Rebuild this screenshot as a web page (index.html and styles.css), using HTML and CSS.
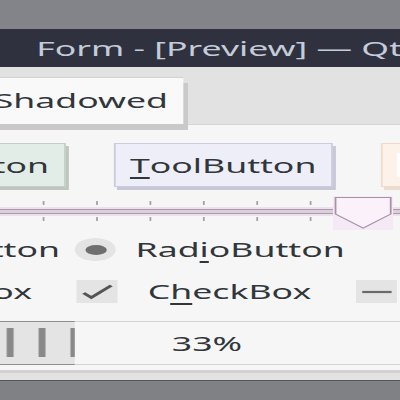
FILE: index.html
```html
<!DOCTYPE html>
<html>
<head>
<meta charset="utf-8">
<title>Form - [Preview]</title>
<link rel="stylesheet" href="styles.css">
</head>
<body>
  <div class="screen">
    <div class="topband"></div>
    <div class="titlebar">Form - [Preview] — Qt Designer</div>
    <div class="window">
      <div class="tabbar">
        <div class="lead tab-lead">
          <div class="tab">Shadowed</div>
        </div>
      </div>
      <div class="pane">
        <div class="row buttons">
          <div class="lead">
            <div class="btn push">PushButton</div>
          </div>
          <div class="btn tool"><u>T</u>oolButton</div>
          <div class="btn cmd"><span class="icon"></span>CommandLinkButton</div>
        </div>

        <div class="slider">
          <div class="ticks">
            <i></i><i></i><i></i><i></i><i></i><i></i><i></i>
          </div>
          <div class="groove"></div>
          <div class="ticks low">
            <i></i><i></i><i></i><i></i><i></i><i></i><i></i>
          </div>
          <svg class="handle" viewBox="0 0 34 34" width="34" height="34">
            <rect x="0" y="0" width="34" height="34" fill="#f6e9f6"/>
            <polygon points="1.5,1.5 32.5,1.5 32.5,18 17,32 1.5,18" fill="#faf1fa" stroke="#a693a6" stroke-width="1"/>
          </svg>
        </div>

        <div class="row radios">
          <div class="lead">
            <div class="radio"><span class="ind"></span>RadioButton</div>
          </div>
          <div class="radio"><span class="ind"><span class="dot"></span></span>Rad<u>i</u>oButton</div>
        </div>

        <div class="row checks">
          <div class="lead">
            <div class="check"><span class="box"></span>CheckBox</div>
          </div>
          <div class="check">
            <span class="box">
              <svg viewBox="0 0 23 23" width="23" height="23"><polyline points="4,13 8.3,17.5 19.5,5.5" fill="none" stroke="#555" stroke-width="2.4"/></svg>
            </span>C<u>h</u>eckBox
          </div>
          <div class="check">
            <span class="box">
              <svg viewBox="0 0 23 23" width="23" height="23"><line x1="3.5" y1="12" x2="20" y2="12" stroke="#6a6a6a" stroke-width="2.2"/></svg>
            </span>CheckBox
          </div>
        </div>

        <div class="progress">
          <div class="fill"></div>
          <span class="label">33%</span>
        </div>
      </div>
    </div>
    <div class="bottomband"></div>
  </div>
</body>
</html>
```

FILE: styles.css
```css
html, body {
  margin: 0;
  height: 100%;
  overflow: hidden;
  background: #838489;
}

/* the whole preview is drawn narrow and stretched sideways */
.screen {
  width: 225px;
  height: 400px;
  transform: scaleX(1.78);
  transform-origin: 0 0;
  overflow: hidden;
  display: flex;
  flex-direction: column;
  font-family: "Noto Sans", "Open Sans", sans-serif;
  font-size: 20px;
  color: #31363b;
}

.topband {
  flex: none;
  height: 29px;
  background: #838489;
}

.titlebar {
  flex: none;
  height: 38px;
  display: flex;
  align-items: center;
  padding-left: 20.4px;
  background: #2f323e;
  color: #c4ccda;
  white-space: nowrap;
}

.window {
  flex: none;
  background: #e2e2e2;
  padding-bottom: 7px;
}

/* a lead cell ends where its (clipped) first widget ends */
.lead {
  flex: none;
  display: flex;
  justify-content: flex-end;
}

.tabbar {
  height: 57px;
  display: flex;
  align-items: flex-end;
}

.tab-lead {
  width: 102.8px;
}

.tab {
  flex: none;
  box-sizing: border-box;
  height: 47px;
  padding: 0 8.4px 2px 10px;
  display: flex;
  align-items: center;
  background: #f9f9f9;
  border-top: 1px solid #d2d2d2;
  box-shadow: 2.6px 6px 0 #c9c9c9;
  white-space: nowrap;
}

.pane {
  background: #f6f6f6;
  border-top: 1px solid #d5d5d5;
  border-bottom: 3px solid #d2d2d2;
  padding: 18px 0 5px;
}

.row {
  display: flex;
  align-items: center;
  white-space: nowrap;
}

/* buttons */
.buttons {
  height: 44px;
}

.buttons .lead {
  width: 36.5px;
}

.btn {
  flex: none;
  box-sizing: border-box;
  height: 44px;
  padding: 0 8px;
  display: flex;
  align-items: center;
  border: 1px solid;
  white-space: nowrap;
}

.btn.push {
  background: #e3ede7;
  border-color: #c6cec9;
  box-shadow: 1.7px 3px 0 #bfc6c1;
}

.btn.tool {
  margin-left: 27.5px;
  background: #eeeef9;
  border-color: #cbcbdd;
  box-shadow: 1.7px 3px 0 #c7c7d7;
}

.btn.cmd {
  margin-left: 27px;
  background: #fdf2ea;
  border-color: #efdacb;
  box-shadow: 1.7px 3px 0 #eadccf;
}

.btn .icon {
  width: 14px;
  height: 24px;
  margin-right: 6px;
  background: #ffffff;
}

u {
  text-decoration: underline;
  text-decoration-thickness: 1.5px;
  text-underline-offset: 4px;
}

/* slider */
.slider {
  position: relative;
  box-sizing: border-box;
  height: 34px;
  margin-top: 9px;
  padding-top: 5px;
}

.ticks {
  display: flex;
  gap: 28.7px;
  height: 4px;
  padding-left: 23.6px;
}

.ticks.low {
  margin-top: 3.5px;
}

.ticks i {
  width: 1.4px;
  background: #a3a3a3;
}

.groove {
  height: 3px;
  margin-top: 3.5px;
  background: #dccfdc;
  border-top: 1.5px solid #ab98ab;
  border-bottom: 1.5px solid #ab98ab;
  box-shadow: 0 0 0 2px #ece0ec;
}

.handle {
  position: absolute;
  left: 187px;
  top: 0;
  display: block;
}

/* radio buttons */
.radios {
  height: 23px;
  margin-top: 8px;
}

.radios .lead {
  width: 33.7px;
}

.radio {
  flex: none;
  display: flex;
  align-items: center;
}

.radios > .radio {
  margin-left: 8.8px;
}

.radio .ind {
  width: 23px;
  height: 23px;
  margin-right: 10.7px;
  border-radius: 50%;
  background: #e4e4e4;
  display: flex;
  align-items: center;
  justify-content: center;
}

.radio .dot {
  width: 12px;
  height: 10px;
  border-radius: 50%;
  background: #6f6f6f;
}

/* check boxes */
.checks {
  height: 23px;
  margin-top: 19px;
}

.checks .lead {
  width: 18px;
}

.check {
  flex: none;
  display: flex;
  align-items: center;
}

.checks > .check {
  margin-left: 25.3px;
}

.check .box {
  width: 23px;
  height: 23px;
  margin-right: 16.7px;
  background: #e4e4e4;
}

.check .box svg {
  display: block;
}

/* progress bar */
.progress {
  position: relative;
  width: 438.6px;
  height: 42px;
  margin: 18px 0 0 -103px;
  border-top: 1px solid #d3d3d3;
  border-bottom: 1px solid #d3d3d3;
  display: flex;
  align-items: center;
  justify-content: center;
}

.progress .fill {
  position: absolute;
  left: 0;
  top: -1px;
  bottom: -1px;
  width: 33%;
  border-top: 1px solid #8e8e8e;
  border-bottom: 1px solid #8e8e8e;
  background-color: #e4e4e4;
  background-image: repeating-linear-gradient(90deg,
    #b9b9b9 0 0.6px, #898989 0.6px 3.9px, #b9b9b9 3.9px 4.5px,
    transparent 4.5px 17.9px);
  background-size: 100% 29px;
  background-position: 16.9px 6px;
  background-repeat: repeat-x;
}

.progress .label {
  position: relative;
}

.bottomband {
  flex: 1;
  border-top: 1px solid #55565b;
  background: #808185;
}
```
